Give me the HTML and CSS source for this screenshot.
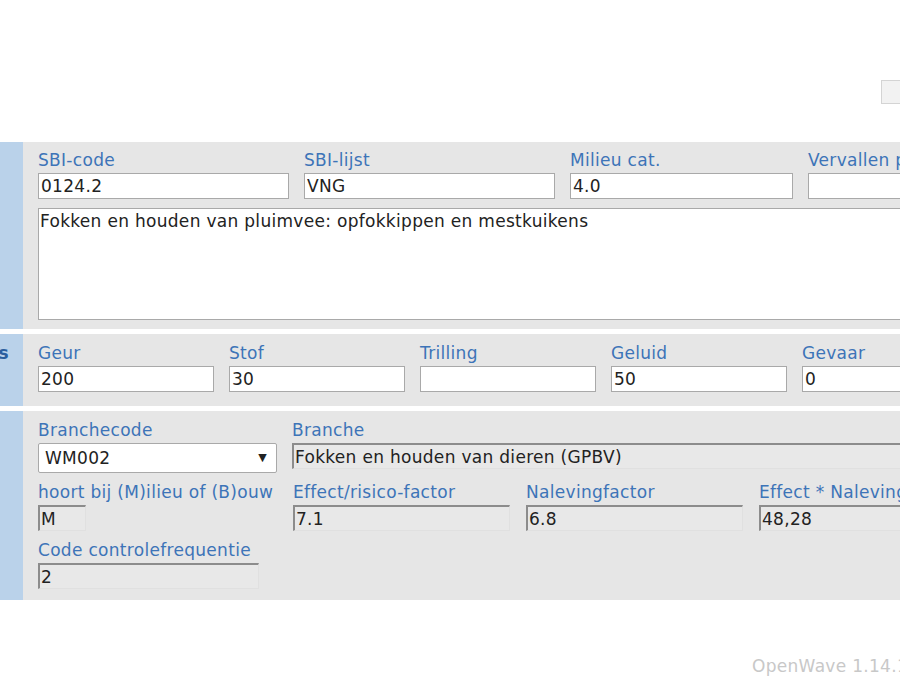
FILE: index.html
```html
<!DOCTYPE html>
<html lang="nl">
<head>
    <meta charset="UTF-8">
    <title>Activiteit - SBI</title>
    <link rel="stylesheet" href="styles.css">
</head>
<body>
    <div class="page">
        <div class="topbar">
            <button class="btn">Opslaan</button>
        </div>

        <!-- SBI -->
        <div class="section">
            <div class="side"></div>
            <div class="panel">
                <div class="row sbi">
                    <div class="field">
                        <label>SBI-code</label>
                        <input type="text" value="0124.2">
                    </div>
                    <div class="field">
                        <label>SBI-lijst</label>
                        <input type="text" value="VNG">
                    </div>
                    <div class="field">
                        <label>Milieu cat.</label>
                        <input type="text" value="4.0">
                    </div>
                    <div class="field">
                        <label>Vervallen per</label>
                        <input type="text" value="">
                    </div>
                </div>
                <textarea class="omschrijving">Fokken en houden van pluimvee: opfokkippen en mestkuikens</textarea>
            </div>
        </div>

        <!-- Afstanden -->
        <div class="section">
            <div class="side"><span class="side-title">Afstanden in meters</span></div>
            <div class="panel panel-mid">
                <div class="row afstanden">
                    <div class="field">
                        <label>Geur</label>
                        <input type="text" value="200">
                    </div>
                    <div class="field">
                        <label>Stof</label>
                        <input type="text" value="30">
                    </div>
                    <div class="field">
                        <label>Trilling</label>
                        <input type="text" value="">
                    </div>
                    <div class="field">
                        <label>Geluid</label>
                        <input type="text" value="50">
                    </div>
                    <div class="field">
                        <label>Gevaar</label>
                        <input type="text" value="0">
                    </div>
                </div>
            </div>
        </div>

        <!-- Branche -->
        <div class="section">
            <div class="side"></div>
            <div class="panel panel-last">
                <div class="branche">
                    <div class="field">
                        <label>Branchecode</label>
                        <div class="select-wrap">
                            <select>
                                <option>WM002</option>
                            </select>
                            <span class="arrow">&#9660;</span>
                        </div>
                    </div>
                    <div class="field span3">
                        <label>Branche</label>
                        <input type="text" class="readonly" value="Fokken en houden van dieren (GPBV)" readonly>
                    </div>

                    <div class="field">
                        <label>hoort bij (M)ilieu of (B)ouw</label>
                        <input type="text" class="readonly small" value="M" readonly>
                    </div>
                    <div class="field">
                        <label>Effect/risico-factor</label>
                        <input type="text" class="readonly" value="7.1" readonly>
                    </div>
                    <div class="field">
                        <label>Nalevingfactor</label>
                        <input type="text" class="readonly" value="6.8" readonly>
                    </div>
                    <div class="field">
                        <label>Effect * Naleving</label>
                        <input type="text" class="readonly" value="48,28" readonly>
                    </div>

                    <div class="field">
                        <label>Code controlefrequentie</label>
                        <input type="text" class="readonly medium" value="2" readonly>
                    </div>
                </div>
            </div>
        </div>

        <div class="footer">OpenWave 1.14.1</div>
    </div>
</body>
</html>
```

FILE: styles.css
```css
* {
    box-sizing: border-box;
}

html, body {
    margin: 0;
    padding: 0;
    overflow: hidden;
}

body {
    font-family: "DejaVu Sans", Verdana, sans-serif;
    font-size: 17px;
    letter-spacing: 0.3px;
    color: #222;
    background: #fff;
}

.page {
    width: 1000px;
}

.topbar {
    height: 142px;
    padding-top: 80px;
    padding-left: 881px;
}

.btn {
    width: 100px;
    height: 24px;
    background: #f2f2f2;
    border: 1px solid #d4d4d4;
    color: #666;
    font-family: inherit;
    font-size: 14px;
}

.section {
    display: flex;
    margin-bottom: 5px;
}

.side {
    width: 23px;
    flex-shrink: 0;
    background: #bad2ea;
    display: flex;
    justify-content: flex-end;
    overflow: hidden;
    padding-right: 14px;
}

.side-title {
    font-weight: bold;
    color: #2c5f9e;
    white-space: nowrap;
    margin-top: 9px;
    line-height: 20px;
}

.panel {
    flex: 1;
    background: #e6e6e6;
    padding: 8px 0 9px 15px;
}

.panel-mid {
    padding-top: 9px;
    padding-bottom: 14px;
}

.panel-last {
    padding-top: 9px;
    padding-bottom: 11px;
}

.row {
    display: grid;
    column-gap: 15px;
}

.sbi {
    grid-template-columns: 251px 251px 223px 251px;
}

.afstanden {
    grid-template-columns: repeat(5, 176px);
}

.field {
    display: flex;
    flex-direction: column;
    align-items: flex-start;
}

.field label {
    color: #3d74b8;
    line-height: 20px;
    height: 20px;
    margin-bottom: 3px;
    white-space: nowrap;
}

input {
    width: 100%;
    height: 26px;
    border: 1px solid #a9a9a9;
    background: #fff;
    font-family: inherit;
    font-size: 17px;
    letter-spacing: 0.3px;
    color: #222;
    padding: 0 2px;
    margin: 0;
}

input.readonly {
    background: #e8e8e8;
    border-style: solid;
    border-width: 2px 1px 1px 2px;
    border-color: #8c8c8c #e0e0e0 #e0e0e0 #8c8c8c;
    padding-left: 1px;
}

input.small {
    width: 48px;
}

input.medium {
    width: 221px;
}

.omschrijving {
    display: block;
    width: 880px;
    height: 112px;
    margin-top: 9px;
    border: 1px solid #a9a9a9;
    background: #fff;
    font-family: inherit;
    font-size: 17px;
    letter-spacing: 0.3px;
    color: #222;
    padding: 2px 1px;
    resize: none;
    line-height: 20px;
}

.branche {
    display: grid;
    grid-template-columns: 239px 217px 217px 217px;
    column-gap: 16px;
    row-gap: 9px;
}

.branche .field:first-child {
    margin-right: -1px;
}

.span3 {
    grid-column: span 3;
    margin-left: -1px;
}

.select-wrap {
    position: relative;
    width: 239px;
}

select {
    appearance: none;
    -webkit-appearance: none;
    width: 100%;
    height: 30px;
    border: 1px solid #a9a9a9;
    border-radius: 2px;
    background: #fff;
    font-family: inherit;
    font-size: 17px;
    letter-spacing: 0.3px;
    color: #222;
    padding: 0 6px;
    margin: 0;
}

.arrow {
    position: absolute;
    right: 10px;
    top: 8px;
    font-size: 11px;
    color: #222;
    pointer-events: none;
}

.footer {
    width: 900px;
    margin-top: 56px;
    padding-left: 752px;
    color: #c8c8c8;
    white-space: nowrap;
}
```
